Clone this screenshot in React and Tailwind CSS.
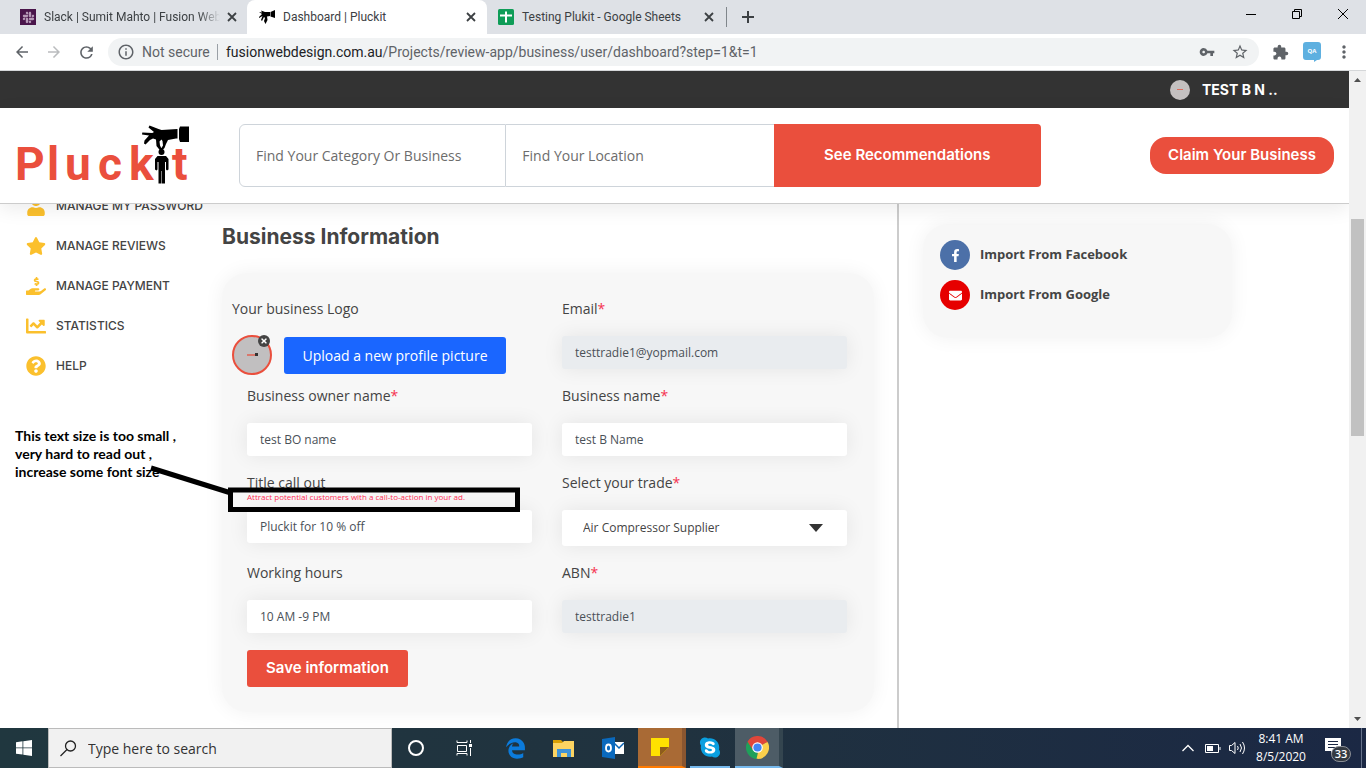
import React from "react";
import { FaStar, FaUser, FaHandHoldingUsd, FaChartLine, FaQuestionCircle, FaFacebookF, FaEnvelope, FaTimes, FaSlack } from "react-icons/fa";
import { FaEdgeLegacy, FaSkype } from "react-icons/fa6";
import { MdVpnKey, MdExtension, MdStarBorder, MdArrowBack, MdArrowForward, MdRefresh, MdMoreVert, MdInfoOutline } from "react-icons/md";

function PluckHand({ className }) {
  return (
    <svg viewBox="0 0 47 60" className={className} aria-hidden="true">
      <path d="M38 1.500h9V17h-9l-1-3V4z" />
      <path d="M35.500 4v9.500H34l-8 1.500-2 4-1.500 4-3 3-1.300-1 2.800-4.500-.5-4.500-1-1.500-2 2 .5 4 2 4-1.500 1.500-4-5-.5-6.500-3-1-3 1.500-4.500 4.500-1.500-1 .5-3 4.500-5L0 9.500.3 7.500l10 .5L12 7 6.500 2.500 7.500.5l9 3.500 3 1z" />
      <circle cx="19.500" cy="27" r="3" />
      <path d="M15.500 31h8.500l2.500 3v10.500l-1.500 1-1-1V37h-1v21.500h-3V46h-.5v12.500h-3V37h-1v7.500l-1 1-1.500-1V34z" />
    </svg>
  );
}

function HandBadge({ className }) {
  return (
    <svg viewBox="0 0 16 16" className={className} aria-hidden="true">
      <path d="M0 3l3 .5L2 1.500 6 3h5v4l-3 .5L8.500 11 6.500 15 5 12l1-3-1-1-2 4-1-1 1.500-4L0 9l0-1 3-3zM11.500 3L16 1v8l-4.500-1.500z" />
    </svg>
  );
}

function TabClose() {
  return (
    <button aria-label="Close tab" className="flex size-4 items-center justify-center text-[#3c4043]">
      <svg viewBox="0 0 10 10" className="size-[10px]" stroke="currentColor" strokeWidth="1.8"><path d="M1 1l8 8M9 1l-8 8" /></svg>
    </button>
  );
}

function BrowserTabs() {
  return (
    <div className="flex h-[34px] shrink-0 bg-[#dee1e6] text-[12px] text-[#3c4043] font-['Roboto',sans-serif]">
      <div className="flex w-[247px] items-center pl-5 pr-[7px]">
        <span className="flex size-4 items-center justify-center bg-[#4a154b]"><FaSlack className="size-[13px] text-[#b79ab8]" /></span>
        <span className="ml-2 w-44 whitespace-nowrap [mask-image:linear-gradient(to_right,black_88%,transparent)]">Slack | Sumit Mahto | Fusion Web</span>
        <span className="ml-1"><TabClose /></span>
      </div>
      <div className="flex w-[240px] items-center rounded-t-lg bg-white pl-3 pr-2">
        <HandBadge className="size-4 text-black" />
        <span className="ml-2 flex-1">Dashboard | Pluckit</span>
        <TabClose />
      </div>
      <div className="flex w-[239px] items-center border-r border-transparent pl-[11px] pr-2">
        <svg viewBox="0 0 16 16" className="size-4" aria-hidden="true">
          <rect width="16" height="16" rx="1.500" fill="#0f9d58" />
          <path d="M2 6.500h12M8 2.500v11" stroke="#fff" strokeWidth="2" />
        </svg>
        <span className="ml-2 flex-1">Testing Plukit - Google Sheets</span>
        <TabClose />
      </div>
      <div className="my-[7px] w-px bg-[#80868b]" />
      <button aria-label="New tab" className="ml-[15px] flex items-center text-[#3c4043]">
        <svg viewBox="0 0 12 12" className="size-3" stroke="currentColor" strokeWidth="2"><path d="M6 0v12M0 6h12" /></svg>
      </button>
      <div className="ml-auto flex text-black">
        <button aria-label="Minimize" className="flex w-[46px] items-center justify-center pb-[6px]"><svg viewBox="0 0 10 10" className="size-[10px]" stroke="currentColor"><path d="M0 5.500h10" /></svg></button>
        <button aria-label="Restore" className="flex w-[46px] items-center justify-center pb-[6px]"><svg viewBox="0 0 10 10" className="size-[10px]" stroke="currentColor" fill="none"><path d="M.5 2.500h7v7h-7zM2.500 2.500v-2h7v7h-2" /></svg></button>
        <button aria-label="Close" className="flex w-[46px] items-center justify-center pb-[6px]"><svg viewBox="0 0 10 10" className="size-[10px]" stroke="currentColor"><path d="M0 0l10 10M10 0L0 10" /></svg></button>
      </div>
    </div>
  );
}

function AddressBar() {
  return (
    <div className="flex h-[37px] shrink-0 items-center border-b border-[#d5d7d9] bg-white pl-[13px] pr-3 text-[#5f6368]">
      <button aria-label="Back"><MdArrowBack className="size-[18px]" /></button>
      <button aria-label="Forward" className="ml-[14px] text-[#babcbe]"><MdArrowForward className="size-[18px]" /></button>
      <button aria-label="Reload" className="ml-[14px]"><MdRefresh className="size-[19px]" /></button>
      <div className="ml-[12px] flex h-7 flex-1 items-center rounded-full bg-[#f1f3f4] pl-[9px] pr-[10px] text-[14px] font-['Roboto',sans-serif]">
        <MdInfoOutline className="size-[18px]" />
        <span className="ml-[7px] w-[67px] whitespace-nowrap">Not secure</span>
        <span className="mx-2 h-4 w-px bg-[#9aa0a6]" />
        <span className="flex-1 whitespace-nowrap"><span className="text-[#202124]">fusionwebdesign.com.au</span>/Projects/review-app/business/user/dashboard?step=1&amp;t=1</span>
        <MdVpnKey className="size-4" />
        <MdStarBorder className="ml-4 size-[18px]" />
      </div>
      <MdExtension className="ml-[13px] size-[17px]" />
      <svg viewBox="0 0 18 20" className="ml-[14px] h-5 w-[18px]" aria-hidden="true">
        <path d="M3 0h12a3 3 0 0 1 3 3v12a3 3 0 0 1-3 3h-1l-3 2v-2H3a3 3 0 0 1-3-3V3a3 3 0 0 1 3-3z" fill="#5eb0e0" />
        <text x="9" y="11" fontSize="6" fontWeight="700" textAnchor="middle" fill="#fff" fontFamily="Open Sans">QA</text>
      </svg>
      <MdMoreVert className="ml-[13px] size-5" />
    </div>
  );
}

const heading = "font-['Inter','Liberation_Sans',sans-serif]";

function SiteHeader() {
  return (
    <header className={`relative z-10 shrink-0 ${heading}`}>
      <div className="flex h-[37px] items-center justify-end gap-3 bg-[#333] pr-[70px] text-[14px] font-bold text-white">
        <span className="flex size-5 items-center justify-center rounded-full bg-[#c4c0c0]"><span className="h-px w-[6px] bg-[#dd6b5c]" /></span>
        <span className="w-[77px] whitespace-nowrap">TEST B N ..</span>
      </div>
      <div className="flex h-24 items-center border-b border-[#ccc] bg-white px-[15px] shadow-[0_5px_18px_rgba(0,0,0,0.08)]">
        <a href="#home" aria-label="Pluckit" className="relative flex h-[62px] w-[174px] shrink-0 items-end text-[46px] font-bold leading-[46px] text-[#ea4f3d] font-['Roboto',sans-serif]">
          <span className="w-[32px]">P</span>
          <span className="w-[18px]">l</span>
          <span className="w-[33px]">u</span>
          <span className="w-[31px]">c</span>
          <span className="w-[43px]">k</span>
          <span>t</span>
          <PluckHand className="absolute right-0 top-0 h-[60px] w-[47px] fill-black" />
        </a>
        <form className="ml-[50px] grid h-[63px] max-w-[802px] flex-1 grid-cols-3 text-[14px] font-['Open_Sans',sans-serif]">
          <input aria-label="Category or business" placeholder="Find Your Category Or Business" className="min-w-0 rounded-l-md border border-[#ced4da] px-4 placeholder:text-[#6c6c6c]" />
          <input aria-label="Location" placeholder="Find Your Location" className="min-w-0 border-y border-[#ced4da] px-4 placeholder:text-[#6c6c6c]" />
          <button type="button" className="rounded-r-sm bg-[#ea4f3d] text-[15px] font-semibold text-white font-['Inter',sans-serif]">See Recommendations</button>
        </form>
        <button className="ml-auto h-[37px] w-[184px] rounded-2xl bg-[#ea4f3d] text-[15px] font-semibold text-white">Claim Your Business</button>
      </div>
    </header>
  );
}

const menu = [
  [FaUser, "MANAGE MY PASSWORD"],
  [FaStar, "MANAGE REVIEWS"],
  [FaHandHoldingUsd, "MANAGE PAYMENT"],
  [FaChartLine, "STATISTICS"],
  [FaQuestionCircle, "HELP"],
];

function Sidebar() {
  return (
    <nav className={`-mt-[18px] w-[222px] shrink-0 pl-[26px] ${heading}`}>
      {menu.map(([Icon, label]) => (
        <a key={label} href="#menu" className="flex h-10 items-center gap-[10px] whitespace-nowrap text-[12px] font-medium text-[#444]">
          <Icon className="size-5 text-[#fbc02d]" />
          {label}
        </a>
      ))}
    </nav>
  );
}

function Field({ id, label, value, required, disabled, note }) {
  return (
    <div className="px-[15px] pb-[17px]">
      <label htmlFor={id} className="block h-5 text-[14px] leading-5">{label}{required && <span className="text-[#f5334f]">*</span>}</label>
      <div className="h-[17px] whitespace-nowrap text-[8px] leading-[8px] text-[#ff2d55]">{note}</div>
      <input id={id} defaultValue={value} disabled={disabled} className="block h-[33px] w-full rounded-[3px] bg-white px-[13px] text-[12px] text-[#495057] shadow-[0_0_20px_rgba(0,0,0,0.08)] disabled:bg-[#e9ecef]" />
    </div>
  );
}

function BusinessForm() {
  return (
    <form className="mt-5 rounded-[25px] bg-[#f7f7f7] pb-[25px] pl-[10px] pr-3 pt-[26px] text-[#444] shadow-[0_0_20px_rgba(0,0,0,0.06)]">
      <div className="grid grid-cols-2">
        <div>
          <div className="h-5 text-[14px] leading-5">Your business Logo</div>
          <div className="mt-4 flex h-10 items-center gap-3">
            <div className="relative flex size-10 items-center justify-center rounded-full border-2 border-[#ea4f3d] bg-[#c1bfc0]">
              <span className="h-[2px] w-2 bg-[#d9786d]" /><span className="mb-[2px] size-[3px] bg-[#333]" />
              <button type="button" aria-label="Remove logo" className="absolute right-0 -top-[2px] flex size-3 items-center justify-center rounded-full bg-[#444] text-white"><FaTimes className="size-2" /></button>
            </div>
            <button type="button" className="h-[37px] w-[222px] rounded-[3px] bg-[#1a66ff] text-[14px] font-medium text-white">Upload a new profile picture</button>
          </div>
        </div>
        <Field id="email" label="Email" value="testtradie1@yopmail.com" required disabled />
        <Field id="owner" label="Business owner name" value="test BO name" required />
        <Field id="business" label="Business name" value="test B Name" required />
        <Field id="callout" label="Title call out" value="Pluckit for 10 % off" note="Attract potential customers with a call-to-action in your ad." />
        <div className="px-[15px] pb-[17px]">
          <label htmlFor="trade" className="block h-5 text-[14px] leading-5">Select your trade<span className="text-[#f5334f]">*</span></label>
          <div className="relative mt-[17px]">
            <select id="trade" className="block h-9 w-full appearance-none rounded-[3px] bg-white pl-[21px] text-[12px] text-[#444] shadow-[0_0_20px_rgba(0,0,0,0.08)]"><option>Air Compressor Supplier</option></select>
            <svg viewBox="0 0 14 8" className="pointer-events-none absolute right-6 top-[14px] h-2 w-[14px] fill-[#333]"><path d="M0 0h14L7 8z" /></svg>
          </div>
        </div>
        <Field id="hours" label="Working hours" value="10 AM -9 PM" />
        <Field id="abn" label="ABN" value="testtradie1" required disabled />
      </div>
      <button type="button" className={`ml-[15px] block h-[37px] w-[161px] rounded-[3px] bg-[#ea4f3d] text-[15px] font-semibold text-white ${heading}`}>Save information</button>
    </form>
  );
}

function ImportPanel() {
  return (
    <aside className="w-[450px] shrink-0 pl-6 pt-5">
      <div className="flex h-[114px] w-[309px] flex-col gap-[10px] rounded-[25px] bg-[#f7f7f7] px-[17px] pt-4 text-[13px] font-bold text-[#444] shadow-[0_0_20px_rgba(0,0,0,0.06)]">
        <a href="#facebook" className="flex items-center gap-[10px]"><span className="flex size-[30px] items-center justify-center rounded-full bg-[#4c70a8] text-white"><FaFacebookF className="size-[13px]" /></span>Import From Facebook</a>
        <a href="#google" className="flex items-center gap-[10px]"><span className="flex size-[30px] items-center justify-center rounded-full bg-[#e60000] text-white"><FaEnvelope className="size-[13px]" /></span>Import From Google</a>
      </div>
    </aside>
  );
}

function ScrollBar() {
  return (
    <div className="flex w-[17px] shrink-0 flex-col items-center bg-[#f1f1f1]">
      <svg viewBox="0 0 17 17" className="size-[17px] fill-[#505050]"><path d="M5 11h7L8.500 7z" /></svg>
      <div className="mt-[131px] h-[217px] w-[13px] bg-[#c1c1c1]" />
      <svg viewBox="0 0 17 17" className="mt-auto size-[17px] fill-[#505050]"><path d="M5 6h7l-3.500 4z" /></svg>
    </div>
  );
}

function Taskbar() {
  return (
    <footer className="flex h-10 shrink-0 bg-linear-to-r from-[#20373f] via-[#20323f] via-50% to-[#1b2844] text-white">
      <button aria-label="Start" className="flex w-12 items-center justify-center">
        <svg viewBox="0 0 16 16" className="size-4 fill-white"><path d="M0 2.200l6.500-.9v6.200H0zM7.300 1.200L16 0v7.500H7.300zM0 8.300h6.500v6.200L0 13.700zM7.300 8.300H16V16l-8.700-1.300z" /></svg>
      </button>
      <label className="flex w-[344px] items-center gap-[11px] border border-[#bbb] bg-[#f1f1f1] pl-[11px]">
        <svg viewBox="0 0 17 17" className="size-[17px] shrink-0" fill="none" stroke="#222" strokeWidth="1.300"><circle cx="10.500" cy="6" r="5" /><path d="M7 9.500L.5 16" /></svg>
        <input aria-label="Search" placeholder="Type here to search" className="w-full bg-transparent text-[14px] placeholder:text-[#333]" />
      </label>
      <button aria-label="Cortana" className="flex w-12 items-center justify-center"><span className="size-4 rounded-full border-2 border-white" /></button>
      <button aria-label="Task view" className="flex w-12 items-center justify-center">
        <svg viewBox="0 0 17 16" className="h-4 w-[17px]" fill="none" stroke="#fff"><path d="M1 .5v2h10v-2M1.500 5.500h9v6h-9zM1 15.500v-2h10v2M14.500 0v3M14.500 8v8" /><path d="M13 4h3v3h-3z" fill="#fff" stroke="none" /></svg>
      </button>
      <button aria-label="Edge" className="flex w-[54px] items-center justify-center"><FaEdgeLegacy className="size-[21px] text-[#0b7bdc]" /></button>
      <button aria-label="File Explorer" className="flex w-11 items-center justify-center">
        <svg viewBox="0 0 22 19" className="h-[19px] w-[22px]"><path d="M0 1h8l2 2h11v15H0z" fill="#d9a005" /><path d="M0 4h9l2-2h10v16H0z" fill="#fcd462" /><path d="M4 18v-8h14v8h-4v-4H8v4z" fill="#3f93d8" /></svg>
      </button>
      <button aria-label="Outlook" className="flex w-[54px] items-center justify-center">
        <svg viewBox="0 0 22 22" className="size-[22px]"><path d="M12 5h10v12H12z" fill="#fff" /><path d="M12 6l5 5 5-5" fill="none" stroke="#0a64b5" strokeWidth="1.500" /><path d="M0 2l13-2v22L0 20z" fill="#0a69bd" /><ellipse cx="6.500" cy="11" rx="2.500" ry="3.500" fill="none" stroke="#fff" strokeWidth="1.800" /></svg>
      </button>
      <button aria-label="Sticky Notes" className="-ml-[2px] flex w-12 items-center justify-center border-b-2 border-r-4 border-b-[#ff7a00] border-r-[#8a5630] bg-[#a96a35]">
        <svg viewBox="0 0 18 18" className="size-[18px]"><path d="M0 0h18v9l-9 9H0z" fill="#ffe100" /><path d="M9 9h9l-9 9z" fill="#8f5c1c" /></svg>
      </button>
      <button aria-label="Skype" className="ml-[4px] mr-[5px] flex w-10 items-center justify-center border-b-2 border-[#76b9ed]">
        <span className="flex size-[22px] items-center justify-center rounded-full bg-[radial-gradient(circle,white_50%,transparent_52%)]"><FaSkype className="size-[23px] text-[#0a9fe0]" /></span>
      </button>
      <button aria-label="Chrome" className="flex w-12 items-center justify-center border-b-2 border-r-4 border-b-[#76b9ed] border-r-[#34454f] bg-[#4d5c66]">
        <svg viewBox="0 0 24 24" className="size-[23px]">
          <path d="M12 12L1.600 6A12 12 0 0 1 22.400 6z" fill="#e0463a" />
          <path d="M12 12L22.400 6A12 12 0 0 1 12 24z" fill="#fcd04b" />
          <path d="M12 12v12A12 12 0 0 1 1.600 6z" fill="#1fa05a" />
          <path d="M12 6.500h10.700L22.400 6 12 5.500zM7.200 14.700L1.600 6 12 9z" fill="#e0463a" />
          <path d="M16.800 14.700L12 24l-1-.5 2-7z" fill="#fcd04b" />
          <circle cx="12" cy="12" r="5.500" fill="#fff" /><circle cx="12" cy="12" r="4.300" fill="#4285f4" />
        </svg>
      </button>
      <div className="ml-auto flex items-center">
        <svg viewBox="0 0 12 8" className="h-2 w-3" fill="none" stroke="#fff" strokeWidth="1.300"><path d="M.5 7L6 1.500 11.500 7" /></svg>
        <svg viewBox="0 0 16 9" className="ml-[11px] h-[9px] w-4" fill="none" stroke="#fff"><path d="M.5.5h13v8H.5zM15 3v3" /><path d="M2 2h6v5H2z" fill="#fff" stroke="none" /></svg>
        <svg viewBox="0 0 17 14" className="ml-2 h-[14px] w-[17px]" fill="none" stroke="#fff"><path d="M.5 4.500h2l3.500-3v11l-3.500-3h-2zM8.500 5q1.500 2 0 4M11 3q3 4 0 8M13.500 1q4 6 0 12" /></svg>
        <div className="ml-3 w-[46px] text-center text-[12px] leading-[18px]"><div className="whitespace-nowrap">8:41 AM</div><div className="flex justify-center whitespace-nowrap">8/5/2020</div></div>
        <div className="relative ml-[21px] mr-[10px] h-5 w-[26px]">
          <svg viewBox="0 0 16 16" className="size-4"><path d="M0 0h16v13H9l-3 3v-3H0z" fill="#fff" /><path d="M3 3.500h10M3 6.500h10M3 9.500h8" stroke="#1b2844" /></svg>
          <span className="absolute -bottom-1 right-0 flex h-4 w-5 items-center justify-center rounded-full border border-[#8b8f96] bg-[#343a42] text-[11px] font-semibold">33</span>
        </div>
        <span className="mr-1 h-10 w-px bg-[#66728a]" />
      </div>
    </footer>
  );
}

function Annotation() {
  return (
    <div className="pointer-events-none absolute left-[15px] top-[427px] z-20 text-[14px] font-bold leading-[18px] text-black font-['Lato',sans-serif]">
      <p className="whitespace-nowrap">This text size is too small ,<br />very hard to read out ,<br />increase some font size</p>
      <svg viewBox="0 0 510 90" className="absolute left-0 top-0 h-[90px] w-[510px] max-w-none" fill="none" stroke="#000">
        <path d="M136 41l80 25" strokeWidth="5" />
        <path d="M215.500 63h287v19.500h-287z" strokeWidth="5" />
      </svg>
    </div>
  );
}

export default function App() {
  return (
    <div className="relative flex h-screen flex-col overflow-hidden bg-white font-['Open_Sans','Noto_Sans',sans-serif]">
      <BrowserTabs />
      <AddressBar />
      <div className="flex min-h-0 flex-1">
        <div className="flex min-w-0 flex-1 flex-col overflow-hidden">
          <SiteHeader />
          <div className="flex min-h-0 flex-1">
            <Sidebar />
            <main className="flex-1 border-r-2 border-[#ccc] pr-[23px] pt-[17px]">
              <h1 className={`h-8 text-[21px] font-bold leading-8 text-[#444] ${heading}`}>Business Information</h1>
              <BusinessForm />
            </main>
            <ImportPanel />
          </div>
        </div>
        <ScrollBar />
      </div>
      <Taskbar />
      <Annotation />
    </div>
  );
}
